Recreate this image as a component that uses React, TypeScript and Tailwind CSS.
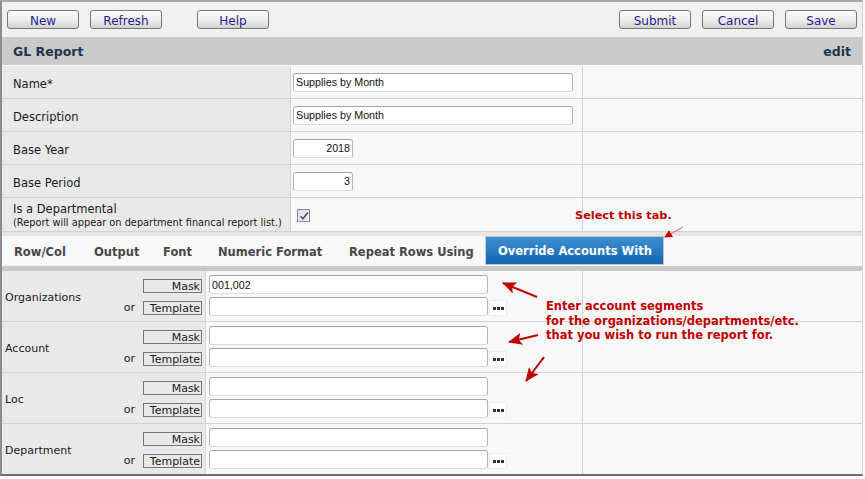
import React from "react";

const F = "font-['DejaVu_Sans',Verdana,sans-serif]";

function Btn({ label, cls = "" }: { label: string; cls?: string }) {
  return (
    <div
      className={`w-[72px] h-[19px] border border-[#767676] rounded-[3px] bg-gradient-to-b from-[#fbfbfb] via-[#eeeeee] to-[#d2d2d2] flex items-center justify-center pt-[2px] text-[12px] leading-none text-[#1e1e8c] ${cls}`}
    >
      {label}
    </div>
  );
}

function FormRow({
  label,
  children,
  h = "h-[33px]",
  lpt = "pt-[5px]",
}: {
  label: React.ReactNode;
  children?: React.ReactNode;
  h?: string;
  lpt?: string;
}) {
  return (
    <div className={`flex ${h} border-b border-[#d2d2d2]`}>
      <div className={`w-[288px] bg-[#e9e9e9] flex flex-col justify-center pl-[11px] ${lpt} text-[11.5px] text-[#1a1a1a]`}>
        {label}
      </div>
      <div className="w-[292px] bg-[#f8f8f8] border-l border-[#d2d2d2] flex items-center pl-[2px]">
        {children}
      </div>
      <div className="flex-1 bg-[#f8f8f8] border-l border-[#d2d2d2]" />
    </div>
  );
}

function TextInput({
  value = "",
  w,
  right = false,
}: {
  value?: string;
  w: string;
  right?: boolean;
}) {
  return (
    <div
      className={`${w} h-[19px] bg-white border border-[#b4b4b4] border-t-[#a4a4a4] border-b-[#d4dbe4] rounded-[3px] flex items-center px-[2px] pt-[1px] font-['Liberation_Sans',Arial,sans-serif] text-[10.7px] text-[#111] ${
        right ? "justify-end" : ""
      }`}
    >
      {value}
    </div>
  );
}

function Dots() {
  return (
    <div className="w-[18px] h-[16px] ml-[1px] border border-[#ececec] bg-white flex items-end justify-center pb-[5px] gap-[1px]">
      <span className="w-[3px] h-[3px] bg-[#333]" />
      <span className="w-[3px] h-[3px] bg-[#333]" />
      <span className="w-[3px] h-[3px] bg-[#333]" />
    </div>
  );
}

function OverrideRow({
  label,
  mask = "",
  last = false,
}: {
  label: string;
  mask?: string;
  last?: boolean;
}) {
  return (
    <div
      className={`flex ${last ? "h-[50px]" : "h-[51px] border-b border-[#d2d2d2]"}`}
    >
      <div className="w-[203px] bg-[#e9e9e9] flex items-center pl-[3px] pr-[3px] text-[11px] text-[#1a1a1a]">
        <div className="flex-1 mt-[4px]">{label}</div>
        <div className="self-start pt-[8px] flex flex-col gap-[6px] items-end">
          <div className="w-[59px] h-[14px] border border-[#777] text-right pr-[1px] leading-[13px]">
            Mask
          </div>
          <div className="flex items-center">
            <span className="mr-[8px] mt-[1px]">or</span>
            <div className="w-[59px] h-[14px] border border-[#777] text-right pr-[1px] leading-[13px]">
              Template
            </div>
          </div>
        </div>
      </div>
      <div className="w-[377px] bg-[#f8f8f8] border-l border-[#d8d8d8] pl-[3px] pt-[4px] flex flex-col gap-[3px]">
        <TextInput w="w-[279px]" value={mask} />
        <div className="flex items-end">
          <TextInput w="w-[279px]" />
          <Dots />
        </div>
      </div>
      <div className="flex-1 bg-[#f8f8f8] border-l border-[#d2d2d2]" />
    </div>
  );
}

const tabs: { label: string; w: string }[] = [
  { label: "Row/Col", w: "w-[80px]" },
  { label: "Output", w: "w-[69px]" },
  { label: "Font", w: "w-[55px]" },
  { label: "Numeric Format", w: "w-[131px]" },
  { label: "Repeat Rows Using", w: "w-[148px]" },
];

export default function App() {
  return (
    <div className={`w-[865px] h-[479px] bg-white relative overflow-hidden ${F}`}>
      <div className="w-[863px] border-l-2 border-l-[#8c8c8c] border-t-2 border-t-[#a8a8a8] border-r border-r-[#cfcfcf] border-b-2 border-b-[#6e6e6e] flex flex-col">
        {/* Toolbar */}
        <div className="h-[35px] bg-[#f0f0f0] flex items-start pt-[8px] pl-[5px] pr-[5px]">
          <Btn label="New" cls="w-[71px]" />
          <Btn label="Refresh" cls="ml-[11px]" />
          <Btn label="Help" cls="ml-[35px]" />
          <div className="flex-1" />
          <Btn label="Submit" />
          <Btn label="Cancel" cls="ml-[11px]" />
          <Btn label="Save" cls="ml-[11px]" />
        </div>
        {/* Header */}
        <div className="h-[28px] bg-[#c9cac9] flex items-center justify-between pl-[11px] pr-[11px] pt-[2px] text-[12.5px] font-bold text-[#25344e]">
          <span>GL Report</span>
          <span>edit</span>
        </div>
        <div className="h-[1px] bg-white" />
        {/* Form */}
        <FormRow label="Name*">
          <TextInput w="w-[280px]" value="Supplies by Month" />
        </FormRow>
        <FormRow label="Description">
          <TextInput w="w-[280px]" value="Supplies by Month" />
        </FormRow>
        <FormRow label="Base Year">
          <TextInput w="w-[60px]" value="2018" right />
        </FormRow>
        <FormRow label="Base Period">
          <TextInput w="w-[60px]" value="3" right />
        </FormRow>
        <FormRow
          h="h-[34px]"
          lpt="pt-[2px]"
          label={
            <>
              <span className="leading-[13px]">Is a Departmental</span>
              <span className="text-[9.8px] leading-[13px]">
                (Report will appear on department financal report list.)
              </span>
            </>
          }
        >
          <div className="ml-[4px] mt-[2px] w-[13px] h-[13px] border border-[#8a8a8a] bg-gradient-to-br from-[#dcdcdc] to-[#f4f4f4] flex items-center justify-center">
            <svg width="10" height="10" viewBox="0 0 10 10">
              <path d="M1.5 5.2 L4 7.8 L8.8 1.5" fill="none" stroke="#3b4f9e" strokeWidth="1.6" />
            </svg>
          </div>
        </FormRow>
        <div className="h-[4px] bg-[#e5e5e5]" />
        {/* Tabs */}
        <div className="h-[30px] bg-[#f8f8f8] flex items-stretch">
          {tabs.map((t) => (
            <div
              key={t.label}
              className={`${t.w} flex items-center pl-[12px] pt-[3px] text-[11.5px] font-bold text-[#474747] whitespace-nowrap`}
            >
              {t.label}
            </div>
          ))}
          <div className="w-[179px] h-[29px] border border-[#c4c4c4] bg-gradient-to-b from-[#3d8fd0] to-[#1265b4] flex items-center pl-[12px] pt-[3px] text-[11.5px] font-bold text-white whitespace-nowrap">
            Override Accounts With
          </div>
        </div>
        <div className="h-[5px] bg-[#c9c9c9]" />
        {/* Override rows */}
        <OverrideRow label="Organizations" mask="001,002" />
        <OverrideRow label="Account" />
        <OverrideRow label="Loc" />
        <OverrideRow label="Department" last />
      </div>

      {/* Annotations */}
      <div className="absolute left-[575px] top-[208px] font-bold text-[11.3px] leading-[15px] text-[#c00000] whitespace-nowrap">
        Select this tab.
      </div>
      <div className="absolute left-[546px] top-[299px] font-bold text-[11.5px] leading-[14.5px] text-[#c00000] whitespace-nowrap">
        Enter account segments
        <br />
        for the organizations/departments/etc.
        <br />
        that you wish to run the report for.
      </div>
      <svg className="absolute left-0 top-0 pointer-events-none" width="865" height="479">
        <defs>
          <marker id="ah" markerWidth="8" markerHeight="8" refX="7" refY="4" orient="auto" markerUnits="userSpaceOnUse">
            <path d="M0 0 L8 4 L0 8 Z" fill="#c00000" />
          </marker>
          <marker id="ahb" markerWidth="14" markerHeight="12" refX="13" refY="6" orient="auto" markerUnits="userSpaceOnUse">
            <path d="M0 0 L14 6 L0 12 L3 6 Z" fill="#c00000" />
          </marker>
        </defs>
        <line x1="683" y1="227" x2="665" y2="237" stroke="#d04040" strokeWidth="0.8" markerEnd="url(#ah)" />
        <line x1="537" y1="297" x2="503" y2="283" stroke="#c00000" strokeWidth="2" markerEnd="url(#ahb)" />
        <line x1="538" y1="335" x2="509" y2="342" stroke="#c00000" strokeWidth="2" markerEnd="url(#ahb)" />
        <line x1="544" y1="357" x2="526" y2="381" stroke="#c00000" strokeWidth="2" markerEnd="url(#ahb)" />
      </svg>
    </div>
  );
}
